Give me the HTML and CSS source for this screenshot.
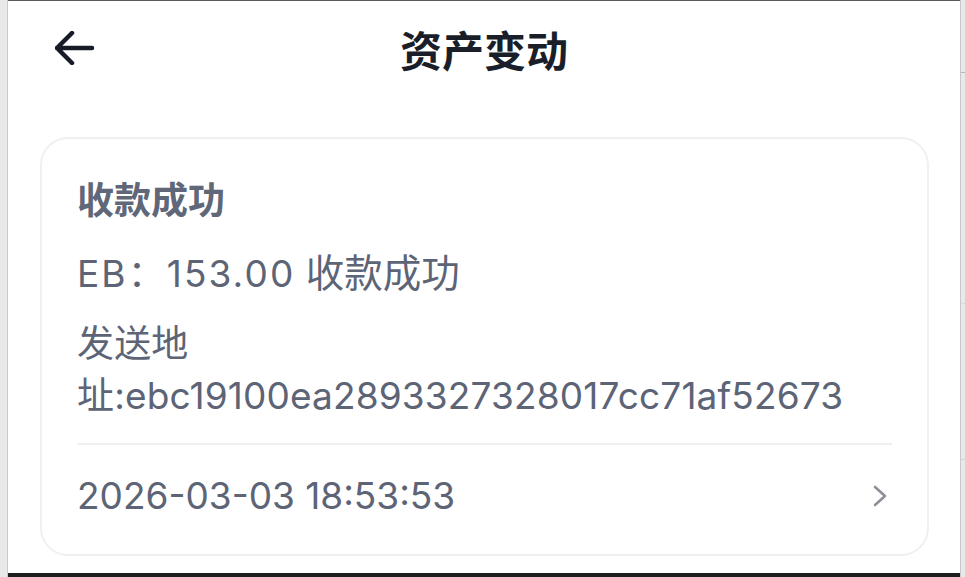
FILE: index.html
```html
<!DOCTYPE html>
<html lang="zh-CN">
<head>
<meta charset="utf-8">
<title>资产变动</title>
<link rel="stylesheet" href="styles.css">
</head>
<body>
<div class="frame">
  <div class="side side-left"></div>
  <div class="phone">
    <header class="nav">
      <button class="back" aria-label="返回">
        <svg width="40" height="34" viewBox="0 0 40 34">
          <path d="M2 17 H37 M17 2 L2 17 L17 32" fill="none" stroke="#171b26" stroke-width="4.5" stroke-linecap="round" stroke-linejoin="round"/>
        </svg>
      </button>
      <h1 class="nav-title">资产变动</h1>
    </header>
    <main class="content">
      <section class="card">
        <h2 class="card-title">收款成功</h2>
        <p class="amount"><span class="amt-num">EB：153.00</span> <span class="amt-text">收款成功</span></p>
        <p class="address">发送地址:ebc19100ea2893327328017cc71af52673</p>
        <div class="divider"></div>
        <div class="date-row">
          <span class="date">2026-03-03 18:53:53</span>
          <svg class="chev" width="14" height="22" viewBox="0 0 14 22">
            <path d="M2 2 L12 11 L2 20" fill="none" stroke="#8c9099" stroke-width="2.6" stroke-linecap="round" stroke-linejoin="round"/>
          </svg>
        </div>
      </section>
    </main>
    <div class="bottom-bar"></div>
  </div>
  <div class="side side-right">
    <div class="rline r1"></div>
    <div class="rline r2"></div>
    <div class="rline r3"></div>
  </div>
</div>
</body>
</html>
```

FILE: styles.css
```css
* { box-sizing: border-box; }
html, body {
  margin: 0;
  padding: 0;
  width: 965px;
  height: 577px;
  overflow: hidden;
  background: #ffffff;
  font-family: Inter, "Noto Sans CJK SC", sans-serif;
}
.frame {
  display: flex;
  width: 965px;
  height: 577px;
}
.side {
  background: #e9e9e9;
  flex: none;
}
.side-left {
  width: 8px;
  border-right: 1px solid #c9c9c9;
}
.side-right {
  width: 5px;
  border-left: 1px solid #c9c9c9;
  display: flex;
  flex-direction: column;
}
.rline {
  height: 1px;
  background: #b9b9b9;
}
.r1 { margin-top: 72px; }
.r2 { margin-top: 230px; background: #dadada; }
.r3 { margin-top: 155px; background: #d0d0d0; }
.phone {
  flex: 1;
  display: flex;
  flex-direction: column;
  border-top: 1px solid #5b5b5b;
  background: #ffffff;
}
.nav {
  height: 94px;
  position: relative;
  display: flex;
  align-items: center;
  justify-content: center;
}
.back {
  position: absolute;
  left: 47px;
  top: 30px;
  padding: 0;
  border: 0;
  background: none;
  display: flex;
}
.nav-title {
  margin: 0;
  font-family: "Noto Sans CJK SC", sans-serif;
  font-size: 42px;
  font-weight: 700;
  color: #1a1e29;
  line-height: 1;
  position: relative;
  top: 1px;
}
.content {
  flex: 1;
  padding: 42px 31px 0 32px;
}
.card {
  border: 2px solid #eef0f2;
  border-radius: 28px;
  padding: 34px 35px 32px 35px;
  color: #5c6476;
}
.card-title {
  margin: 0;
  font-family: "Noto Sans CJK SC", sans-serif;
  font-size: 37px;
  line-height: 50px;
  font-weight: 700;
  color: #5f6778;
}
.amount {
  margin: 24px 0 0;
  font-size: 37px;
  line-height: 52px;
}
.amt-num {
  letter-spacing: 2.1px;
}
.amt-text {
  font-size: 38.5px;
}
.address {
  margin: 18px 0 0;
  font-size: 37px;
  line-height: 52px;
  letter-spacing: 0.15px;
}
.divider {
  margin-top: 21px;
  height: 2px;
  background: #eef0f2;
}
.date-row {
  margin-top: 25px;
  display: flex;
  align-items: center;
  justify-content: space-between;
  height: 52px;
}
.date {
  font-size: 37px;
  line-height: 52px;
}
.chev {
  margin-right: 5px;
}
.bottom-bar {
  height: 4px;
  background: #1e1e1e;
  flex: none;
}
```
